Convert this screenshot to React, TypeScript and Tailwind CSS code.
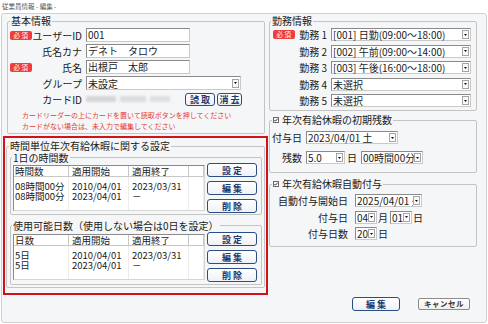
import React from 'react';

// 必須バッジ
const Badge: React.FC = () => (
  <span className="flex h-[9px] w-[22px] shrink-0 items-center justify-center rounded-[2px] bg-[#f03c3c] pl-[1px] text-[6.5px] leading-none tracking-[1.5px] text-white">
    必須
  </span>
);

const Arrow: React.FC = () => (
  <span className="mr-[1px] flex h-[9px] w-[7px] shrink-0 items-center justify-center border border-[#a5a5a5] bg-[#fafafa]">
    <svg width="3" height="2" viewBox="0 0 3 2">
      <path d="M0 0h3L1.5 2z" fill="#111" />
    </svg>
  </span>
);

const Select: React.FC<{ value: string; className?: string; tall?: boolean }> = ({ value, className = '', tall }) => (
  <div
    className={`flex items-center border border-[#8a8a8a] border-r-[#c9c9c9] border-b-[#c9c9c9] bg-white ${tall ? 'h-[14px]' : 'h-[13px]'} ${className}`}
  >
    <span className="min-w-0 flex-1 overflow-x-clip whitespace-nowrap pl-[1px] text-[10px] leading-[11px]">{value}</span>
    <Arrow />
  </div>
);

const TextBox: React.FC<{ value: string }> = ({ value }) => (
  <div className="flex h-[14px] w-[104px] items-center border border-[#8a8a8a] border-r-[#c9c9c9] border-b-[#c9c9c9] bg-white pl-[1px] text-[10px] leading-[12px] whitespace-pre">
    {value}
  </div>
);

const NavyBtn: React.FC<{ label: string; className?: string }> = ({ label, className = '' }) => (
  <div
    className={`flex items-center justify-center whitespace-nowrap rounded-[3px] border-[1.5px] border-[#2c4d82] bg-gradient-to-b from-white to-[#eef1f6] text-[9px] font-bold leading-none text-[#1d3a6c] ${className}`}
  >
    {label}
  </div>
);

const Check: React.FC = () => (
  <svg width="6" height="6" viewBox="0 0 6 6" className="mr-[3px] shrink-0">
    <rect x="0.5" y="0.5" width="5" height="5" fill="#fff" stroke="#6b6b6b" />
    <path d="M1.4 3l1.1 1.2 2.1-2.5" stroke="#222" fill="none" strokeWidth="0.9" />
  </svg>
);

type Col = { head: string; cells: string[]; w: string; pad: string };

const ListView: React.FC<{ cols: Col[] }> = ({ cols }) => (
  <div className="flex h-[46px] w-[192px] overflow-hidden border border-[#8a8a8a] border-r-[#d5d5d5] border-b-[#d5d5d5] bg-white text-[9.5px]">
    {cols.map((c, i) => (
      <div key={i} className={`flex flex-col ${c.w}`}>
        <div className={`h-[11px] shrink-0 border-r border-b border-[#c8c8c8] leading-[11px] whitespace-nowrap ${c.pad}`}>{c.head}</div>
        <div className="flex-1 border-r border-[#ececec] pt-[4px]">
          {c.cells.map((v, j) => (
            <div key={j} className={`h-[10px] leading-[10px] whitespace-nowrap ${c.pad}`}>
              {v}
            </div>
          ))}
        </div>
      </div>
    ))}
  </div>
);

const LeftRow: React.FC<{ req?: boolean; label: string; children: React.ReactNode }> = ({ req, label, children }) => (
  <div className="flex h-[14px] items-center">
    <div className="flex w-[78px] items-center pl-[2px] pr-[4px]">
      {req && <Badge />}
      <span className="ml-auto whitespace-nowrap">{label}</span>
    </div>
    {children}
  </div>
);

const WorkRow: React.FC<{ req?: boolean; label: string; value: string }> = ({ req, label, value }) => (
  <div className="flex h-[13px] items-center pl-[3px]">
    <div className="flex w-[58px] items-center pr-[4px]">
      {req && <Badge />}
      <span className="ml-auto whitespace-nowrap">{label}</span>
    </div>
    <Select value={value} className="w-[140px]" />
  </div>
);

const SideButtons: React.FC<{ className?: string }> = ({ className = '' }) => (
  <div className={`ml-[2px] flex w-[50px] flex-col gap-[4px] ${className}`}>
    <NavyBtn label="設 定" className="h-[14px]" />
    <NavyBtn label="編 集" className="h-[14px]" />
    <NavyBtn label="削 除" className="h-[14px]" />
  </div>
);

const fsBorder = 'rounded-[2px] border border-[#c4c4c4]';

const App: React.FC = () => {
  const dayCols: Col[] = [
    { head: '時間数', cells: ['08時間00分', '08時間00分'], w: 'w-[55px]', pad: 'pl-[1px]' },
    { head: '適用開始', cells: ['2010/04/01', '2023/04/01'], w: 'w-[60px]', pad: 'pl-[3px]' },
    { head: '適用終了', cells: ['2023/03/31', '－'], w: 'w-[60px]', pad: 'pl-[3px]' },
    { head: '', cells: [], w: 'flex-1', pad: '' },
  ];
  const usableCols: Col[] = [
    { head: '日数', cells: ['5日', '5日'], w: 'w-[55px]', pad: 'pl-[1px]' },
    { head: '適用開始', cells: ['2010/04/01', '2023/04/01'], w: 'w-[60px]', pad: 'pl-[3px]' },
    { head: '適用終了', cells: ['2023/03/31', '－'], w: 'w-[60px]', pad: 'pl-[3px]' },
    { head: '', cells: [], w: 'flex-1', pad: '' },
  ];

  return (
    <div className="h-[324px] w-[488px] overflow-hidden bg-white font-['Noto_Sans_CJK_JP',sans-serif] text-[10px] text-[#1a1a1a]">
      {/* タイトル */}
      <div className="h-[13px] pl-[2px] pt-[3px] text-[6.5px] leading-[7px] text-[#555]">従業員情報 - 編集 -</div>

      <div className="ml-[1px] flex h-[310px] w-[486px] rounded-[3px] border border-[#cdd0d5] bg-[#f5f6f8]">
        {/* 左カラム */}
        <div className="ml-[1px] flex w-[265px] flex-col">
          <fieldset className={`ml-[4px] mt-[1px] w-[258px] pb-[1px] ${fsBorder}`}>
            <legend className="ml-[2px] px-[1px] leading-[12px]">基本情報</legend>
            <div className="flex flex-col gap-[2px] pt-[1px]">
              <LeftRow req label="ユーザーID">
                <TextBox value="001" />
              </LeftRow>
              <LeftRow label="氏名カナ">
                <TextBox value="デネト　タロウ" />
              </LeftRow>
              <LeftRow req label="氏名">
                <TextBox value="出根戸　太郎" />
              </LeftRow>
              <LeftRow label="グループ">
                <Select value="未設定" className="w-[155px]" tall />
              </LeftRow>
              <LeftRow label="カードID">
                <div className="flex w-[99px] items-center gap-[4px] blur-[1.2px]">
                  <span className="h-[6px] w-[30px] bg-[#d6d6d6]" />
                  <span className="h-[6px] w-[26px] bg-[#dcdcdc]" />
                  <span className="h-[6px] w-[20px] bg-[#e0e0e0]" />
                </div>
                <NavyBtn label="読 取" className="h-[13px] w-[30px]" />
                <NavyBtn label="消 去" className="ml-[2px] h-[13px] w-[25px]" />
              </LeftRow>
            </div>
            <div className="mt-[4px] pl-[14px] text-[7px] leading-[11px] text-[#e53a32]">
              <div>カードリーダーの上にカードを置いて読取ボタンを押してください</div>
              <div>カードがない場合は、未入力で編集してください</div>
            </div>
          </fieldset>

          {/* 時間単位年次有給休暇 */}
          <div className="mt-[2px] border-2 border-[#d0121b] pb-[5px]">
            <fieldset className={`mx-[1px] mt-[2px] pb-[2px] ${fsBorder}`}>
              <legend className="ml-[2px] px-[1px] leading-[12px]">時間単位年次有給休暇に関する設定</legend>
              <fieldset className={`ml-[3px] mr-[2px] pb-[1px] ${fsBorder}`}>
                <legend className="ml-[1px] px-[1px] leading-[11px]">1日の時間数</legend>
                <div className="flex items-start">
                  <div className="ml-[2px] mt-[2px]">
                    <ListView cols={dayCols} />
                  </div>
                  <SideButtons />
                </div>
              </fieldset>
              <fieldset className={`ml-[3px] mr-[2px] mt-[5px] pb-[2px] ${fsBorder}`}>
                <legend className="ml-[1px] px-[1px] leading-[11px]">使用可能日数（使用しない場合は0日を設定）</legend>
                <div className="flex items-start">
                  <div className="ml-[2px] mt-[3px]">
                    <ListView cols={usableCols} />
                  </div>
                  <SideButtons className="mt-[1px]" />
                </div>
              </fieldset>
            </fieldset>
          </div>
        </div>

        {/* 右カラム */}
        <div className="ml-[1px] flex w-[208px] flex-col">
          <fieldset className={`mt-[1px] pb-[3px] ${fsBorder}`}>
            <legend className="ml-[1px] px-[1px] leading-[12px]">勤務情報</legend>
            <div className="flex flex-col gap-[3.5px] pt-[1px]">
              <WorkRow req label="勤務 1" value="[001] 日勤(09:00～18:00)" />
              <WorkRow label="勤務 2" value="[002] 午前(09:00～14:00)" />
              <WorkRow label="勤務 3" value="[003] 午後(16:00～18:00)" />
              <WorkRow label="勤務 4" value="未選択" />
              <WorkRow label="勤務 5" value="未選択" />
            </div>
          </fieldset>

          <fieldset className={`mt-[3px] pb-[8px] ${fsBorder}`}>
            <legend className="ml-[2px] flex items-center px-[1px] leading-[12px]">
              <Check />
              年次有給休暇の初期残数
            </legend>
            <div className="flex flex-col gap-[7px] pt-[5px]">
              <div className="flex h-[13px] items-center">
                <span className="w-[36px] pr-[4px] text-right">付与日</span>
                <Select value="2023/04/01 土" className="w-[92px]" />
              </div>
              <div className="flex h-[13px] items-center">
                <span className="w-[36px] pr-[4px] text-right">残数</span>
                <Select value="5.0" className="w-[39px]" />
                <span className="ml-[2px]">日</span>
                <Select value="00時間00分" className="ml-[4px] w-[62px]" />
              </div>
            </div>
          </fieldset>

          <fieldset className={`mt-[5px] pb-[6px] ${fsBorder}`}>
            <legend className="ml-[2px] flex items-center px-[1px] leading-[12px]">
              <Check />
              年次有給休暇自動付与
            </legend>
            <div className="flex flex-col gap-[3.5px] pt-[4px]">
              <div className="flex h-[13px] items-center">
                <span className="w-[85px] whitespace-nowrap pr-[7px] text-right">自動付与開始日</span>
                <Select value="2025/04/01 火" className="w-[67px]" />
              </div>
              <div className="flex h-[13px] items-center">
                <span className="w-[85px] pr-[7px] text-right">付与日</span>
                <Select value="04" className="w-[22px]" />
                <span className="ml-[1px]">月</span>
                <Select value="01" className="ml-[2px] w-[22px]" />
                <span className="ml-[1px]">日</span>
              </div>
              <div className="flex h-[13px] items-center">
                <span className="w-[85px] pr-[7px] text-right">付与日数</span>
                <Select value="20" className="w-[22px]" />
                <span className="ml-[1px]">日</span>
              </div>
            </div>
          </fieldset>

          <div className="mb-[11px] mt-auto flex items-center">
            <NavyBtn label="編 集" className="ml-[83px] h-[14px] w-[48px] border-2 border-[#1f3d70]" />
            <div className="ml-[18px] flex h-[12px] w-[52px] items-center justify-center rounded-[2px] border border-[#8c8c8c] bg-gradient-to-b from-white to-[#efefef] text-[7.5px] font-bold leading-none tracking-[0.5px] text-[#333]">
              キャンセル
            </div>
          </div>
        </div>
      </div>
    </div>
  );
};

export default App;
